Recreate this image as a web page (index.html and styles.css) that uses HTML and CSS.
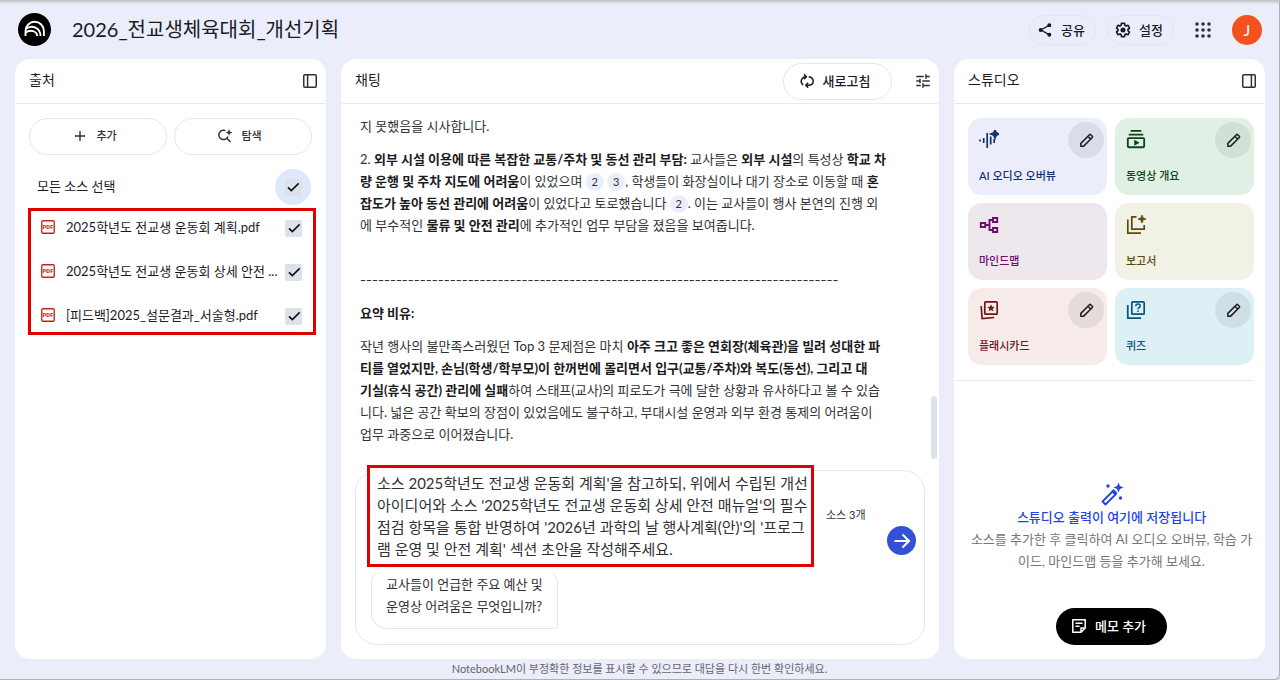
FILE: index.html
```html
<!DOCTYPE html>
<html lang="ko">
<head>
  <meta charset="UTF-8">
  <meta name="viewport" content="width=device-width, initial-scale=1.0">
  <title>2026_전교생체육대회_개선기획 - NotebookLM</title>
  <link rel="stylesheet" href="styles.css">
</head>
<body>
  <svg width="0" height="0" class="sprite" aria-hidden="true">
    <symbol id="i-check" viewBox="0 0 24 24"><path d="M4.5 12.5l5 5L20.5 6.5" fill="none" stroke="currentColor" stroke-width="2.4"/></symbol>
    <symbol id="i-pencil" viewBox="0 0 24 24"><path d="M4 20v-4L16.2 3.8q.8-.8 1.7 0l2.3 2.3q.8.8 0 1.7L8 20zM14 6l4 4" fill="none" stroke="currentColor" stroke-width="2.2" stroke-linejoin="round"/></symbol>
  </svg>

  <header class="topbar">
    <svg class="logo" viewBox="0 0 33 33" fill="none" stroke="#fff" stroke-width="1.9">
      <circle cx="16.5" cy="16.5" r="16.5" fill="#000" stroke="none"/>
      <path d="M7.5 23v-5a9.2 9.2 0 0 1 18.400 0v5"/>
      <path d="M7.500 16c6.500-5 15-1 15 7"/>
      <path d="M7.500 19.600c4.600-3.600 11.600-1.600 11.600 3.400"/>
    </svg>
    <h1>2026_전교생체육대회_개선기획</h1>
    <div class="actions">
      <button class="pill small">
        <svg class="icon16" viewBox="0 0 24 24" fill="none" stroke="currentColor" stroke-width="2">
          <path d="M6 12L18 5M6 12l12 7"/>
          <g fill="currentColor"><circle cx="5.500" cy="12" r="2"/><circle cx="18.500" cy="4.800" r="2"/><circle cx="18.500" cy="19.200" r="2"/></g>
        </svg>
        공유
      </button>
      <button class="pill small">
        <svg class="icon16" viewBox="0 0 24 24">
          <path d="M19.430 12.980c.04-.32.07-.64.07-.98 0-.34-.03-.66-.07-.98l2.110-1.650c.19-.15.24-.42.12-.64l-2-3.460c-.09-.16-.26-.25-.44-.25-.06 0-.12.01-.17.03l-2.490 1c-.52-.4-1.080-.73-1.690-.98l-.38-2.650C14.460 2.180 14.250 2 14 2h-4c-.25 0-.46.18-.49.42l-.38 2.650c-.61.25-1.170.59-1.690.98l-2.490-1c-.06-.02-.12-.03-.18-.03-.17 0-.34.09-.43.25l-2 3.460c-.13.22-.07.49.12.64l2.110 1.650c-.04.32-.07.65-.07.98 0 .33.03.66.07.98l-2.110 1.650c-.19.15-.24.42-.12.64l2 3.460c.09.16.26.25.44.25.06 0 .12-.01.17-.03l2.490-1c.52.4 1.080.73 1.690.98l.38 2.650c.03.24.24.42.49.42h4c.25 0 .46-.18.49-.42l.38-2.650c.61-.25 1.170-.59 1.690-.98l2.490 1c.06.02.12.03.18.03.17 0 .34-.09.43-.25l2-3.460c.12-.22.07-.49-.12-.64l-2.110-1.650z" fill="none" stroke="currentColor" stroke-width="2.400"/>
          <circle cx="12" cy="12" r="3.800" fill="currentColor"/>
        </svg>
        설정
      </button>
      <button class="bare apps" aria-label="Google 앱">
        <svg width="16" height="16" viewBox="0 0 16 16" fill="#303134">
          <circle cx="2" cy="2" r="1.800"/><circle cx="8" cy="2" r="1.800"/><circle cx="14" cy="2" r="1.800"/>
          <circle cx="2" cy="8" r="1.800"/><circle cx="8" cy="8" r="1.800"/><circle cx="14" cy="8" r="1.800"/>
          <circle cx="2" cy="14" r="1.800"/><circle cx="8" cy="14" r="1.800"/><circle cx="14" cy="14" r="1.800"/>
        </svg>
      </button>
      <button class="avatar">J</button>
    </div>
  </header>

  <main>
    <section class="panel">
      <div class="panel-head">
        <h2>출처</h2>
        <button class="bare" aria-label="출처 패널 접기">
          <svg width="14" height="14" viewBox="0 0 14 14" fill="none" stroke="#303134" stroke-width="1.500"><rect x=".75" y=".75" width="12.500" height="12.500" rx="1"/><path d="M4.600 1v12"/></svg>
        </button>
      </div>
      <div class="source-actions">
        <button class="pill">
          <svg class="icon16" viewBox="0 0 16 16" fill="none" stroke="currentColor" stroke-width="1.400"><path d="M8 3v10M3 8h10"/></svg>
          추가
        </button>
        <button class="pill">
          <svg class="icon16" viewBox="0 0 16 16" fill="none" stroke="currentColor" stroke-width="1.500">
            <path d="M8.500 2.600A4.700 4.700 0 1 0 11 8.500M9.600 10l4 4"/>
            <path d="M12 1l.9 2.600 2.600.9-2.600.9L12 8l-.9-2.600-2.600-.9 2.600-.9z" fill="currentColor" stroke="none"/>
          </svg>
          탐색
        </button>
      </div>
      <div class="source select-all">
        <label class="name" for="all">모든 소스 선택</label>
        <span class="check halo"><input type="checkbox" id="all" checked><svg><use href="#i-check"/></svg></span>
      </div>
      <div class="source-list">
        <div class="source">
          <svg class="pdf" viewBox="0 0 14 14">
            <rect x=".75" y=".75" width="12.500" height="12.500" rx="1"/>
            <text x="7" y="9" text-anchor="middle">PDF</text>
          </svg>
          <label class="name" for="s1">2025학년도 전교생 운동회 계획.pdf</label>
          <span class="check"><input type="checkbox" id="s1" checked><svg><use href="#i-check"/></svg></span>
        </div>
        <div class="source">
          <svg class="pdf" viewBox="0 0 14 14">
            <rect x=".75" y=".75" width="12.500" height="12.500" rx="1"/>
            <text x="7" y="9" text-anchor="middle">PDF</text>
          </svg>
          <label class="name" for="s2">2025학년도 전교생 운동회 상세 안전 ...</label>
          <span class="check"><input type="checkbox" id="s2" checked><svg><use href="#i-check"/></svg></span>
        </div>
        <div class="source">
          <svg class="pdf" viewBox="0 0 14 14">
            <rect x=".75" y=".75" width="12.500" height="12.500" rx="1"/>
            <text x="7" y="9" text-anchor="middle">PDF</text>
          </svg>
          <label class="name" for="s3">[피드백]2025_설문결과_서술형.pdf</label>
          <span class="check"><input type="checkbox" id="s3" checked><svg><use href="#i-check"/></svg></span>
        </div>
      </div>
    </section>

    <section class="panel chat">
      <div class="panel-head">
        <h2>채팅</h2>
        <div class="chat-tools">
          <button class="pill refresh">
            <svg class="icon16" viewBox="0 0 16 16" fill="none" stroke="currentColor" stroke-width="1.500">
              <path d="M4.200 12a4.800 4.800 0 0 1-1.200-6.200Q4.200 3.700 7 3.700M9.800 3.700q3.200.3 4.200 3.100Q15 12 10 12.300H7"/>
              <path d="M5 1.300l2.400 2.400L5 6.100M9.200 9.900l-2.400 2.400 2.400 2.400"/>
            </svg>
            새로고침
          </button>
          <button class="bare" aria-label="채팅 설정">
            <svg width="18" height="18" viewBox="0 0 24 24" fill="#303134"><path d="M3 17v2h6v-2H3zM3 5v2h10V5H3zm10 16v-2h8v-2h-8v-2h-2v6h2zM7 9v2H3v2h4v2h2V9H7zm14 4v-2H11v2h10zm-6-4h2V7h4V5h-4V3h-2v6z"/></svg>
          </button>
        </div>
      </div>
      <div class="messages">
        <p>지 못했음을 시사합니다.</p>
        <p>2. <b>외부 시설 이용에 따른 복잡한 교통/주차 및 동선 관리 부담:</b> 교사들은 <b>외부 시설</b>의 특성상 <b>학교 차<br>량 운행 및 주차 지도에 어려움</b>이 있었으며 <span class="cite">2</span> <span class="cite">3</span>, 학생들이 화장실이나 대기 장소로 이동할 때 <b>혼<br>잡도가 높아 동선 관리에 어려움</b>이 있었다고 토로했습니다 <span class="cite">2</span>. 이는 교사들이 행사 본연의 진행 외<br>에 부수적인 <b>물류 및 안전 관리</b>에 추가적인 업무 부담을 졌음을 보여줍니다.</p>
        <p class="dashes"><br>--------------------------------------------------------------------------------</p>
        <p><b>요약 비유:</b></p>
        <p>작년 행사의 불만족스러웠던 Top 3 문제점은 마치 <b>아주 크고 좋은 연회장(체육관)을 빌려 성대한 파<br>티를 열었지만, 손님(학생/학부모)이 한꺼번에 몰리면서 입구(교통/주차)와 복도(동선), 그리고 대<br>기실(휴식 공간) 관리에 실패</b>하여 스태프(교사)의 피로도가 극에 달한 상황과 유사하다고 볼 수 있습<br>니다. 넓은 공간 확보의 장점이 있었음에도 불구하고, 부대시설 운영과 외부 환경 통제의 어려움이<br>업무 과중으로 이어졌습니다.</p>
      </div>
      <div class="scroll-thumb"></div>
      <form class="composer">
        <textarea rows="4" aria-label="질문 입력">소스 2025학년도 전교생 운동회 계획'을 참고하되, 위에서 수립된 개선
아이디어와 소스 '2025학년도 전교생 운동회 상세 안전 매뉴얼'의 필수
점검 항목을 통합 반영하여 '2026년 과학의 날 행사계획(안)'의 '프로그
램 운영 및 안전 계획' 섹션 초안을 작성해주세요.</textarea>
        <div class="send-area">
          <span>소스 3개</span>
          <button type="button" class="send" aria-label="제출">
            <svg width="18" height="18" viewBox="0 0 18 18" fill="none" stroke="#fff" stroke-width="2"><path d="M1.500 9h14M9.500 2.500L16 9l-6.500 6.500"/></svg>
          </button>
        </div>
        <button type="button" class="suggestion">교사들이 언급한 주요 예산 및<br>운영상 어려움은 무엇입니까?</button>
      </form>
    </section>

    <section class="panel">
      <div class="panel-head">
        <h2>스튜디오</h2>
        <button class="bare" aria-label="스튜디오 패널 접기">
          <svg width="14" height="14" viewBox="0 0 14 14" fill="none" stroke="#303134" stroke-width="1.500"><rect x=".75" y=".75" width="12.500" height="12.500" rx="1"/><path d="M9.400 1v12"/></svg>
        </button>
      </div>
      <div class="studio-grid">
        <div class="tile audio">
          <svg class="icon20" viewBox="0 0 20 20" fill="none" stroke="currentColor" stroke-width="1.700">
            <path d="M1 9.500v2M4.700 8v5M8.200 3v15M11.700 6.500v8M15.200 9v4"/>
            <path d="M16 0l1.100 2.900L20 4l-2.900 1.100L16 8l-1.100-2.900L12 4l2.900-1.100z" fill="currentColor"/>
          </svg>
          <span>AI 오디오 오버뷰</span>
          <button class="edit" aria-label="AI 오디오 오버뷰 맞춤설정"><svg><use href="#i-pencil"/></svg></button>
        </div>
        <div class="tile video">
          <svg class="icon20" viewBox="1 2 22 22" fill="currentColor"><path d="M4 6h16v2H4zm2-4h12v2H6zm14 8H4c-1.100 0-2 .9-2 2v8c0 1.100.9 2 2 2h16c1.100 0 2-.9 2-2v-8c0-1.100-.9-2-2-2zm0 10H4v-8h16v8zm-10-7.270v6.530L16 16z"/></svg>
          <span>동영상 개요</span>
          <button class="edit" aria-label="동영상 개요 맞춤설정"><svg><use href="#i-pencil"/></svg></button>
        </div>
        <div class="tile mindmap">
          <svg class="icon20" viewBox="0 0 20 20" fill="none" stroke="currentColor" stroke-width="1.900"><path d="M1.800 8h4.400v4H1.800zM14 3h4.200v4H14zM14 13h4.200v4H14zM6.500 10H10M14 5h-3.500v10H14"/></svg>
          <span>마인드맵</span>
        </div>
        <div class="tile report">
          <svg class="icon20" viewBox="0 0 20 20" fill="none" stroke="currentColor" stroke-width="1.700">
            <path d="M10.500 1.800H5.800v12.400h12.400V10M1.800 4.500v13.700H15"/>
            <path d="M16 0l1.100 2.900L20 4l-2.900 1.100L16 8l-1.100-2.900L12 4l2.900-1.100z" fill="currentColor" stroke-width=".8"/>
          </svg>
          <span>보고서</span>
        </div>
        <div class="tile cards">
          <svg class="icon20" viewBox="0 0 20 20" fill="none" stroke="currentColor" stroke-width="1.700">
            <rect x="5.800" y="1.800" width="12.400" height="12.400" rx="1"/><path d="M2.200 6l.9 12.500 12-1"/>
            <path d="M12 4.300l1.100 2.500 2.700.2-2.100 1.800.7 2.600-2.400-1.400-2.400 1.400.7-2.600L8.200 7l2.700-.2z" fill="currentColor" stroke="none"/>
          </svg>
          <span>플래시카드</span>
          <button class="edit" aria-label="플래시카드 맞춤설정"><svg><use href="#i-pencil"/></svg></button>
        </div>
        <div class="tile quiz">
          <svg class="icon20" viewBox="0 0 20 20" fill="none" stroke="currentColor" stroke-width="1.700">
            <rect x="5.800" y="1.800" width="12.400" height="12.400" rx="1"/><path d="M1.800 5v13.200H15"/>
            <path d="M9.800 6.200c0-3 4.400-2.800 4.400-.2 0 1.600-2.200 1.600-2.200 3.200M12 10.500v1.600" stroke-width="1.500"/>
          </svg>
          <span>퀴즈</span>
          <button class="edit" aria-label="퀴즈 맞춤설정"><svg><use href="#i-pencil"/></svg></button>
        </div>
      </div>
      <div class="studio-empty">
        <svg width="24" height="24" viewBox="0 0 24 24" fill="none" stroke="currentColor" stroke-width="1.800">
          <path d="M2.500 19.500L13 9l3 3L5.500 22.500z" stroke-linejoin="round"/>
          <g fill="currentColor" stroke="none">
            <path d="M11 9.500L13.500 7l4 4-2.500 2.500z"/>
            <path d="M18.500.5l1.400 3.600 3.600 1.400-3.600 1.400-1.400 3.600-1.400-3.600-3.600-1.400 3.600-1.400z"/>
            <circle cx="8" cy="4" r="1.700"/><circle cx="20.500" cy="16" r="1.700"/>
          </g>
        </svg>
        <strong>스튜디오 출력이 여기에 저장됩니다</strong>
        <p>소스를 추가한 후 클릭하여 AI 오디오 오버뷰, 학습 가<br>이드, 마인드맵 등을 추가해 보세요.</p>
        <button class="note">
          <svg width="14" height="14" viewBox="0 0 14 14" fill="none" stroke="#fff" stroke-width="1.500"><path d="M9 13.200H.8V.8h12.400V9zM9 13V9h4M3.500 4.200h7M3.500 7.200h4" stroke-linejoin="round"/></svg>
          메모 추가
        </button>
      </div>
    </section>
  </main>

  <footer>NotebookLM이 부정확한 정보를 표시할 수 있으므로 대답을 다시 한번 확인하세요.</footer>
</body>
</html>
```
FILE: styles.css
```css
* {
  box-sizing: border-box;
}
html {
  background: #d8dbe2;
}
body {
  margin: 0;
  min-height: 100vh;
  display: flex;
  flex-direction: column;
  background: linear-gradient(#d9dce6, #ebedfa 3px) #ebedfa;
  border-top: 2px solid #c5cac8;
  border-right: 1px solid #aeb0b6;
  border-bottom: 1px solid #aeb0b6;
  border-bottom-right-radius: 6px;
  font-family: Lato, "Noto Sans CJK KR", sans-serif;
  font-size: 13px;
  line-height: 22px;
  color: #303134;
}
.sprite {
  position: absolute;
}
svg {
  flex: none;
}
h1, h2, p {
  margin: 0;
  font-weight: 400;
}
button {
  font: inherit;
  color: inherit;
  cursor: pointer;
  display: flex;
  align-items: center;
  justify-content: center;
  padding: 0;
  border: 0;
  background: none;
}
.icon16 {
  width: 16px;
  height: 16px;
}
.icon20 {
  width: 20px;
  height: 20px;
}

/* top bar */
.topbar {
  height: 57px;
  display: flex;
  align-items: center;
  padding: 0 17px 2px 18px;
}
.logo {
  width: 33px;
  height: 33px;
}
h1 {
  margin-left: 21px;
  padding-bottom: 2px;
  font-size: 20px;
  line-height: 30px;
  color: #1b1b1f;
}
.actions {
  margin-left: auto;
  display: flex;
  align-items: center;
}
.pill {
  flex: 1;
  height: 37px;
  gap: 8px;
  padding: 0 7px 1px 0;
  border: 1px solid #e3e5f3;
  border-radius: 19px;
  font-size: 11px;
  font-weight: 500;
}
.pill.small {
  flex: none;
  width: 67px;
  height: 30px;
  margin-right: 11px;
  padding: 0 3px 0 0;
  font-size: 13px;
  color: #1b1b1f;
}
.apps {
  margin: 0 21px 0 10px;
}
.avatar {
  width: 30px;
  height: 30px;
  border-radius: 50%;
  background: #f4511e;
  color: #fff;
  font-size: 16px;
}

/* panels */
main {
  flex: 1;
  display: grid;
  grid-template-columns: 311px minmax(0, 1fr) 311px;
  gap: 15px;
  padding: 0 14px 0 15px;
}
.panel {
  position: relative;
  display: flex;
  flex-direction: column;
  background: #fff;
  border-radius: 15px;
}
.panel-head {
  height: 45px;
  display: flex;
  align-items: center;
  justify-content: space-between;
  padding: 0 9px 0 14px;
  border-bottom: 1px solid #e8eaf0;
}
h2 {
  padding-bottom: 2px;
  font-size: 14px;
  color: #1b1b1f;
}

/* sources */
.source-actions {
  display: flex;
  gap: 7px;
  margin: 14px 14px 0;
}
.source {
  display: flex;
  align-items: center;
  height: 32px;
}
.name {
  flex: 1;
  padding-bottom: 2px;
  white-space: nowrap;
  color: #1b1b1f;
}
.select-all {
  height: 36px;
  margin: 14px 15px 3px 22px;
}
.source-list {
  display: flex;
  flex-direction: column;
  gap: 12px;
  margin: 0 10px 0 13px;
  padding: 1px 11px 0 10px;
  border: 3px solid #e00000;
}
.pdf {
  width: 14px;
  height: 14px;
  margin: 0 11px 3px 0;
}
.pdf rect {
  fill: #fff;
  stroke: #c5221f;
  stroke-width: 1.3;
}
.pdf text {
  font-family: Roboto, sans-serif;
  font-size: 6px;
  font-weight: 900;
  fill: #d93025;
}
.check {
  position: relative;
  display: flex;
  align-items: center;
  justify-content: center;
  width: 17px;
  height: 17px;
}
.check.halo {
  width: 36px;
  height: 36px;
  border-radius: 50%;
  background: #dfe8f8;
}
.check input {
  appearance: none;
  width: 17px;
  height: 17px;
  margin: 0;
  border-radius: 2px;
  background: #dde1eb;
}
.check svg {
  position: absolute;
  width: 16px;
  height: 16px;
  color: #111;
  pointer-events: none;
}

/* chat */
.chat-tools {
  display: flex;
  gap: 22px;
}
.refresh {
  flex: none;
  width: 109px;
  padding-right: 6px;
  font-size: 13px;
  color: #1b1b1f;
}
.chat .panel-head {
  padding-right: 7px;
}
.messages {
  display: flex;
  flex-direction: column;
  gap: 11px;
  flex: 1;
  padding: 11px 19px;
  white-space: nowrap;
}
.messages b {
  color: #1b1b1f;
}
.dashes {
  font-family: Inter, sans-serif;
}
.cite {
  display: inline-block;
  width: 18px;
  height: 18px;
  border-radius: 50%;
  background: #ebedfa;
  font-size: 11px;
  line-height: 18px;
  text-align: center;
}
.scroll-thumb {
  position: absolute;
  right: 2px;
  top: 337px;
  width: 6px;
  height: 63px;
  border-radius: 3px;
  background: #dde1eb;
}
.composer {
  display: grid;
  grid-template-columns: minmax(0, 447px) 1fr;
  margin: 0 14px 14px;
  padding: 0 8px 15px 11px;
  border: 1px solid #e3e5f3;
  border-radius: 22px;
}
.composer textarea {
  height: 102px;
  margin-top: -6px;
  padding: 4px 0 4px 7px;
  border: 3px solid #e00000;
  background: #fff;
  font: inherit;
  font-size: 15px;
  line-height: 22px;
  color: #303134;
  white-space: pre;
  resize: none;
  overflow: hidden;
}
.send-area {
  display: flex;
  flex-direction: column;
  justify-content: flex-end;
  padding: 0 0 12px 12px;
  font-size: 11px;
}
.send {
  align-self: flex-end;
  width: 29px;
  height: 29px;
  border-radius: 50%;
  background: #3550d8;
}
.suggestion {
  justify-self: start;
  margin: 1px 0 0 4px;
  padding: 4px 14px 11px;
  text-align: left;
  border: 1px solid #e3e5f3;
  border-top-color: transparent;
  border-radius: 16px 16px 4px 16px;
}

/* studio */
.studio-grid {
  display: grid;
  grid-template-columns: 1fr 1fr;
  gap: 8px;
  margin-right: 11px;
  padding: 14px 0 15px 14px;
  border-bottom: 1px solid #e8eaf5;
}
.tile {
  position: relative;
  display: flex;
  flex-direction: column;
  justify-content: space-between;
  height: 77px;
  padding: 12px 11px 8px;
  border-radius: 14px;
  font-size: 11px;
  font-weight: 500;
}
.edit {
  position: absolute;
  top: 4px;
  right: 3px;
  width: 36px;
  height: 36px;
  border-radius: 50%;
  background: rgba(60, 64, 67, 0.09);
  color: #202124;
}
.edit svg {
  width: 17px;
  height: 17px;
}
.audio {
  background: #ebedfa;
  color: #12316f;
}
.video {
  background: #e1f0e4;
  color: #0b4519;
}
.mindmap {
  background: #eee8ee;
  color: #6b0f68;
}
.report {
  background: #f1f1e6;
  color: #5c4a12;
}
.cards {
  background: #f6ebe9;
  color: #73151a;
}
.quiz {
  background: #ddf0f6;
  color: #0b5578;
}
.studio-empty {
  flex: 1;
  display: flex;
  flex-direction: column;
  justify-content: flex-end;
  align-items: center;
  padding: 0 11px 14px 15px;
  text-align: center;
  white-space: nowrap;
  color: #747678;
}
.studio-empty svg, .studio-empty strong {
  color: #1f46e0;
}
.studio-empty strong {
  font-weight: 500;
}
.studio-empty .note {
  width: 111px;
  height: 37px;
  gap: 9px;
  margin-top: 36px;
  padding: 0 5px 1px 0;
  border-radius: 19px;
  background: #000;
  color: #fff;
  font-weight: 500;
}

footer {
  height: 20px;
  font-size: 11px;
  line-height: 20px;
  text-align: center;
  color: #646669;
}
```
